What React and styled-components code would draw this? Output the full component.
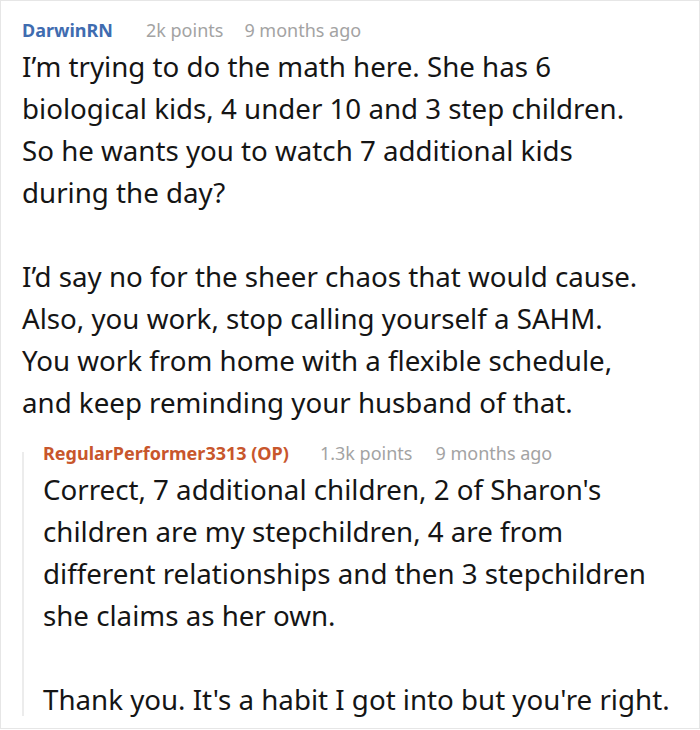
import React from "react";
import styled, { createGlobalStyle } from "styled-components";

const Global = createGlobalStyle`
  html, body { margin: 0; padding: 0; background: #ffffff; }
  body { font-family: "Noto Sans", "DejaVu Sans", sans-serif; }
`;

const Card = styled.div`
  box-sizing: border-box;
  width: 700px;
  height: 729px;
  border: 1px solid #e6e6e6;
  padding: 16px 10px 0 21px;
  background: #fff;
  overflow: hidden;
`;

const Meta = styled.div`
  display: flex;
  align-items: baseline;
  font-size: 18px;
  line-height: 27px;
  white-space: nowrap;
`;

const Author = styled.span`
  font-weight: 700;
  color: ${(p) => (p.$op ? "#c8562c" : "#3f6cb0")};
`;

const Info = styled.span`
  color: #a3a3a3;
  margin-left: ${(p) => p.$gap}px;
`;

const Body = styled.div`
  margin-top: 1px;
  font-size: 27.7px;
  line-height: 42px;
  color: #151515;
  white-space: nowrap;
`;

const Para = styled.p`
  margin: 0 0 42px;
  &:last-child { margin-bottom: 0; }
`;

const Reply = styled.div`
  position: relative;
  margin-top: 17px;
  padding-left: 21px;
  &::before {
    content: "";
    position: absolute;
    left: 0;
    top: 12px;
    bottom: 4px;
    width: 2px;
    background: #ececec;
  }
`;

function Comment({ author, op, points, time, pointsGap, timeGap, paragraphs }) {
  return (
    <>
      <Meta>
        <Author $op={op}>{author}</Author>
        <Info $gap={pointsGap}>{points}</Info>
        <Info $gap={timeGap}>{time}</Info>
      </Meta>
      <Body>
        {paragraphs.map((p, i) => (
          <Para key={i}>
            {p.map((line, j) => (
              <React.Fragment key={j}>
                {line}
                {j < p.length - 1 && <br />}
              </React.Fragment>
            ))}
          </Para>
        ))}
      </Body>
    </>
  );
}

export default function App() {
  return (
    <>
      <Global />
      <Card>
        <Comment
          author="DarwinRN"
          points="2k points"
          time="9 months ago"
          pointsGap={33}
          timeGap={21}
          paragraphs={[
            [
              "I’m trying to do the math here. She has 6",
              "biological kids, 4 under 10 and 3 step children.",
              "So he wants you to watch 7 additional kids",
              "during the day?",
            ],
            [
              "I’d say no for the sheer chaos that would cause.",
              "Also, you work, stop calling yourself a SAHM.",
              "You work from home with a flexible schedule,",
              "and keep reminding your husband of that.",
            ],
          ]}
        />
        <Reply>
          <Comment
            author="RegularPerformer3313 (OP)"
            op
            points="1.3k points"
            time="9 months ago"
            pointsGap={31}
            timeGap={23}
            paragraphs={[
              [
                "Correct, 7 additional children, 2 of Sharon's",
                "children are my stepchildren, 4 are from",
                "different relationships and then 3 stepchildren",
                "she claims as her own.",
              ],
              ["Thank you. It's a habit I got into but you're right."],
            ]}
          />
        </Reply>
      </Card>
    </>
  );
}
